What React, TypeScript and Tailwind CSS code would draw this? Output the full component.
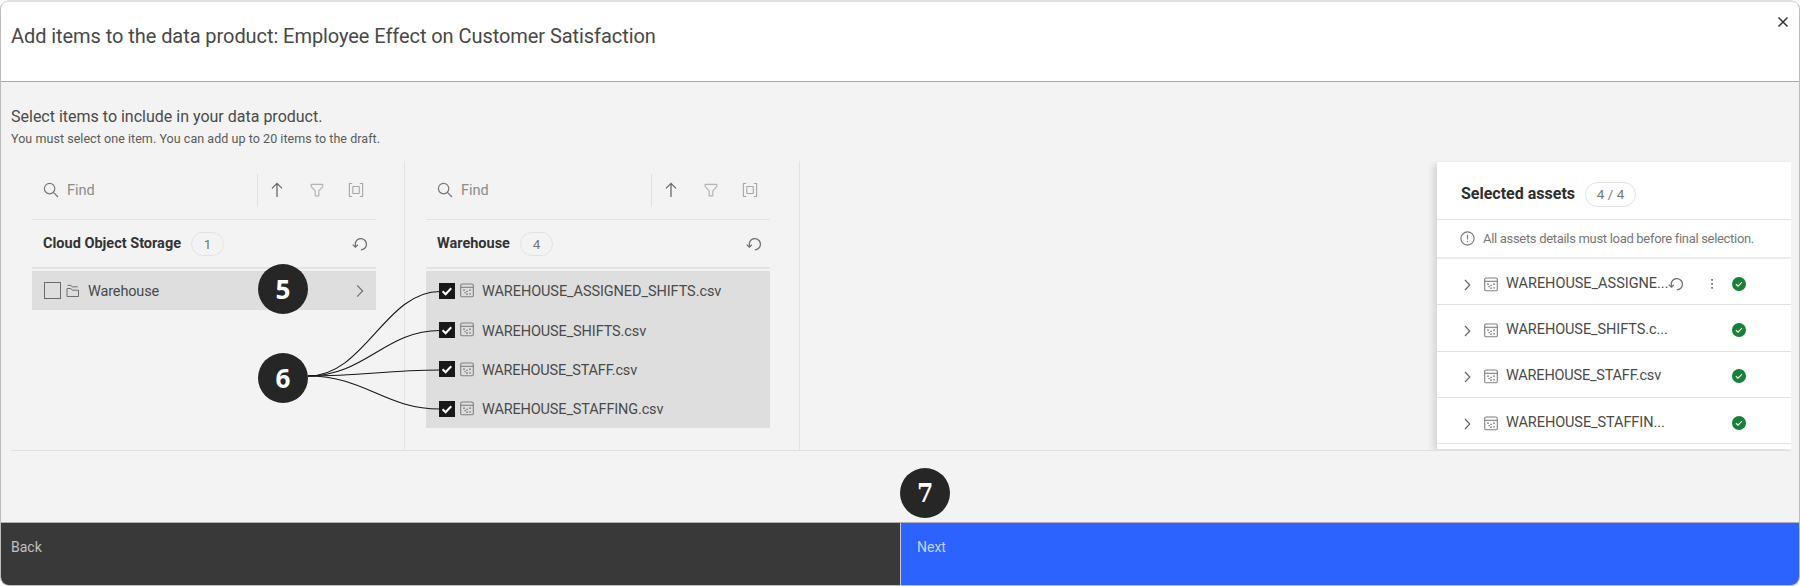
import React from "react";

type IconProps = { className?: string };

const SearchIcon = () => (
  <svg width="16" height="16" viewBox="0 0 16 16" fill="none" stroke="#777" strokeWidth="1.2">
    <circle cx="6.6" cy="6.6" r="5.2" />
    <path d="M10.4 10.4 15 15" />
  </svg>
);

const ArrowUpIcon = () => (
  <svg width="16" height="16" viewBox="0 0 16 16" fill="none" stroke="#6a6a6a" strokeWidth="1.3">
    <path d="M8 15V1.6M3 6.4l5-5 5 5" />
  </svg>
);

const FilterIcon = () => (
  <svg width="16" height="16" viewBox="0 0 16 16" fill="none" stroke="#b4b4b4" strokeWidth="1.2" strokeLinejoin="round">
    <path d="M2.2 2.3h11.6v2.3L9.8 8.8v5H6.2v-5l-4-4.2z" />
  </svg>
);

const SelectWindowIcon = () => (
  <svg width="16" height="16" viewBox="0 0 16 16" fill="none" stroke="#a6a6a6" strokeWidth="1.1">
    <path d="M4.2 1.5H1.4v13h2.8M11.8 1.5h2.8v13h-2.8" />
    <rect x="4.8" y="4.5" width="6.5" height="7" rx=".5" />
  </svg>
);

const ResetIcon = ({ className }: IconProps) => (
  <svg className={className} width="16" height="16" viewBox="0 0 16 16" fill="none" stroke="#6b6b6b" strokeWidth="1.2">
    <path d="M3.3 10.9V7.4a5.6 5.6 0 1 1 5.6 6.4" />
    <path d="M.8 8.7l2.5 2.5 2.6-2.5" />
  </svg>
);

const ChevronIcon = ({ className }: IconProps) => (
  <svg className={className} width="8" height="14" viewBox="0 0 8 14" fill="none" stroke="#707070" strokeWidth="1.2">
    <path d="M1.2 1.4 6.6 7l-5.4 5.6" />
  </svg>
);

const SmallChevronIcon = () => (
  <svg width="8" height="12" viewBox="0 0 8 12" fill="none" stroke="#666" strokeWidth="1.2">
    <path d="M1 1 5.8 6 1 11" />
  </svg>
);

const FolderIcon = () => (
  <svg className="shrink-0" width="14" height="14" viewBox="0 0 14 14" fill="none" stroke="#6e6e6e" strokeWidth="1">
    <path d="M1 12.5v-8h3.8l1.5 1.7h6.2v6.3z" />
    <path d="M1.6 1.4h3.2l1.5 1.4h5.4" />
  </svg>
);

const DataSetIcon = () => (
  <svg className="shrink-0" width="14" height="15" viewBox="0 0 14 15" fill="none" stroke="#808080" strokeWidth="1.1">
    <rect x=".7" y="1" width="12.6" height="12.8" rx="1.4" />
    <path d="M.7 4.3h12.6" />
    <path d="M3 7.2h2M6.2 8.3h1.6M9 7.2h2M4.4 9.6h1.4M6 11.2h2M9.2 10.8h1.8" strokeWidth="1.2" />
  </svg>
);

const CheckedBox = () => (
  <svg className="shrink-0" width="16" height="16" viewBox="0 0 16 16">
    <rect width="16" height="16" fill="#181818" />
    <path d="m3.6 8.3 3 2.9 5.6-6" fill="none" stroke="#fff" strokeWidth="2" />
  </svg>
);

const SuccessIcon = () => (
  <svg width="14" height="14" viewBox="0 0 14 14">
    <circle cx="7" cy="7" r="7" fill="#198038" />
    <path d="m3.9 7.2 2.1 2 4-4" fill="none" stroke="#fff" strokeWidth="1.2" />
  </svg>
);

const InfoIcon = () => (
  <svg width="15" height="15" viewBox="0 0 15 15" fill="none" stroke="#777" strokeWidth="1.1">
    <circle cx="7.5" cy="7.5" r="6.6" />
    <path d="M7.5 3.8v4.7M7.5 9.9v1.3" />
  </svg>
);

const Toolbar = () => (
  <div className="flex h-[59px] items-center border-b border-[#e2e2e2] pl-[11px]">
    <SearchIcon />
    <span className="ml-[8px] pt-[1px] text-[14.5px] text-[#8b8b8b]">Find</span>
    <span className="ml-auto h-[33px] w-px bg-[#e0e0e0]" />
    <div className="flex w-[118px] items-center justify-between pr-[12px] pl-[11px]">
      <ArrowUpIcon />
      <FilterIcon />
      <SelectWindowIcon />
    </div>
  </div>
);

const ColumnHeading = ({ count, children }: { count: string; children: React.ReactNode }) => (
  <div className="flex h-[49px] items-center border-b-2 border-[#e3e3e3] pt-[1px] pr-[8px] pl-[11px]">
    {children}
    <span className="ml-[10px] flex h-[24px] w-[33px] items-center justify-center rounded-full border border-[#e2e2e2] text-[13.5px] text-[#757575]">
      {count}
    </span>
    <ResetIcon className="ml-auto" />
  </div>
);

const files = [
  { name: "WAREHOUSE_ASSIGNED_SHIFTS.csv", track: "tracking-[-0.08px]" },
  { name: "WAREHOUSE_SHIFTS.csv", track: "tracking-[-0.12px]" },
  { name: "WAREHOUSE_STAFF.csv", track: "tracking-[-0.2px]" },
  { name: "WAREHOUSE_STAFFING.csv", track: "tracking-[-0.15px]" },
];

const assets = [
  { name: "WAREHOUSE_ASSIGNE...", track: "tracking-[-0.02px]", active: true },
  { name: "WAREHOUSE_SHIFTS.c...", track: "tracking-[-0.08px]", active: false },
  { name: "WAREHOUSE_STAFF.csv", track: "tracking-[-0.2px]", active: false },
  { name: "WAREHOUSE_STAFFIN...", track: "tracking-[-0.08px]", active: false },
];

const badge =
  "absolute flex size-[50px] items-center justify-center rounded-full bg-[#262626] font-['Noto_Sans',sans-serif] text-[26px] font-bold text-white";

export default function App() {
  return (
    <div className="relative flex h-[586px] w-[1800px] flex-col overflow-hidden rounded-[9px] border border-t-2 border-[#bdbdbd] border-t-[#e0e0e0] bg-[#f3f3f3] font-[Roboto,sans-serif] whitespace-nowrap text-[#4a4a4a]">
      <header className="flex h-[80px] shrink-0 justify-between border-b border-[#a8a8a8] bg-white pr-[10px] pl-[10px]">
        <h1 className="h-[68px] text-[20px] leading-[69px] tracking-[-0.065px] text-[#484848]">
          Add items to the data product: Employee Effect on Customer Satisfaction
        </h1>
        <svg className="mt-[14px]" width="12" height="12" viewBox="0 0 12 12" fill="none" stroke="#333" strokeWidth="1.5">
          <path d="M1.5 1.5l9 9M10.5 1.5l-9 9" />
        </svg>
      </header>

      <main className="flex h-[440px] shrink-0 flex-col pr-[8px] pl-[10px]">
        <p className="mt-[24px] text-[16px] leading-[22px]">Select items to include in your data product.</p>
        <p className="mt-[1px] text-[12.5px] leading-[20px] tracking-[0.05px] text-[#5a5a5a]">
          You must select one item. You can add up to 20 items to the draft.
        </p>

        <div className="mt-[12px] flex h-[290px] shrink-0 border-b border-[#e0e0e0]">
          <section className="w-[394px] shrink-0 border-r border-[#e2e2e2] pr-[28px] pl-[21px]">
            <Toolbar />
            <ColumnHeading count="1">
              <h2 className="text-[14.5px] font-bold text-[#333]">Cloud Object Storage</h2>
            </ColumnHeading>
            <div className="mt-[2px] flex h-[39px] items-center bg-[#dedede] pr-[12px] pl-[12px]">
              <span className="size-[17px] border border-[#6a6a6a]" />
              <span className="ml-[5px]">
                <FolderIcon />
              </span>
              <span className="ml-[8px] pt-[2px] text-[14.5px] tracking-[-0.15px]">Warehouse</span>
              <ChevronIcon className="ml-auto" />
            </div>
          </section>

          <section className="w-[395px] shrink-0 border-r border-[#e2e2e2] pr-[29px] pl-[21px]">
            <Toolbar />
            <ColumnHeading count="4">
              <h2 className="text-[14.5px] font-bold text-[#333]">Warehouse</h2>
            </ColumnHeading>
            <ul className="mt-[2px] bg-[#dedede]">
              {files.map((f) => (
                <li key={f.name} className="flex h-[39.3px] items-center pl-[13px]">
                  <CheckedBox />
                  <span className="ml-[5px]">
                    <DataSetIcon />
                  </span>
                  <span className={`ml-[8px] pt-[3px] text-[14.5px] ${f.track}`}>{f.name}</span>
                </li>
              ))}
            </ul>
          </section>

          <div className="ml-auto w-[364px] shrink-0 overflow-hidden pt-[1px] pl-[10px]">
            <section className="h-[287px] bg-white shadow-[-4px_2px_6px_rgba(0,0,0,0.12)]">
              <div className="flex h-[58px] items-center border-b border-[#e2e2e2] pt-[7px] pl-[24px]">
                <h2 className="text-[16px] font-bold text-[#2e2e2e]">Selected assets</h2>
                <span className="ml-[10px] flex h-[25px] w-[51px] items-center justify-center rounded-full border border-[#e2e2e2] text-[13.5px] text-[#777]">
                  4 / 4
                </span>
              </div>
              <div className="flex h-[39px] items-center border-b-2 border-[#ececec] pl-[23px]">
                <InfoIcon />
                <p className="ml-[8px] text-[13px] tracking-[-0.31px] text-[#777]">
                  All assets details must load before final selection.
                </p>
              </div>
              <ul>
                {assets.map((a) => (
                  <li key={a.name} className="flex h-[46.3px] items-center border-b border-[#e2e2e2] pt-[4px] pl-[27px]">
                    <span className="mt-[2px]">
                      <SmallChevronIcon />
                    </span>
                    <span className="mt-[1px] ml-[12px]">
                      <DataSetIcon />
                    </span>
                    <span className={`ml-[8px] w-[162px] shrink-0 text-[14.5px] ${a.track}`}>{a.name}</span>
                    <span className="flex w-[78px] shrink-0 items-center justify-between">
                      {a.active ? <ResetIcon /> : <i />}
                      {a.active && (
                        <svg className="ml-[7px]" width="4" height="14" viewBox="0 0 4 14" fill="#555">
                          <rect x="1.3" y="2" width="1.5" height="1.7" />
                          <rect x="1.3" y="6" width="1.5" height="1.7" />
                          <rect x="1.3" y="10" width="1.5" height="1.7" />
                        </svg>
                      )}
                      <SuccessIcon />
                    </span>
                  </li>
                ))}
              </ul>
            </section>
          </div>
        </div>
      </main>

      <footer className="flex flex-1 border-t border-[#b0b0b0] text-[14px]">
        <button className="flex w-[899px] items-start bg-[#393939] pt-[14px] pl-[10px] text-[#c2c2c2]">Back</button>
        <button className="flex flex-1 items-start border-l border-[#c8c8c8] bg-[#2c63ff] pt-[14px] pl-[16px] text-[#c5d3ff]">
          Next
        </button>
      </footer>

      <svg className="absolute top-[286px] left-[306px]" width="134" height="126" viewBox="307 288 134 126" fill="none" stroke="#161616" strokeWidth="1.1">
        <path d="M308 376C365 376 385 291.500 440 291.500" />
        <path d="M308 376C365 376 385 330.500 440 330.500" />
        <path d="M308 376C365 376 385 370 440 370" />
        <path d="M308 376C365 376 385 409 440 409" />
      </svg>
      <span className={`${badge} top-[262px] left-[257px]`}>5</span>
      <span className={`${badge} top-[351px] left-[257px]`}>6</span>
      <span className={`${badge} top-[466px] left-[899px]`}>
        <span className="scale-x-[.9] font-['DejaVu_Serif'] font-bold">7</span>
      </span>
    </div>
  );
}
